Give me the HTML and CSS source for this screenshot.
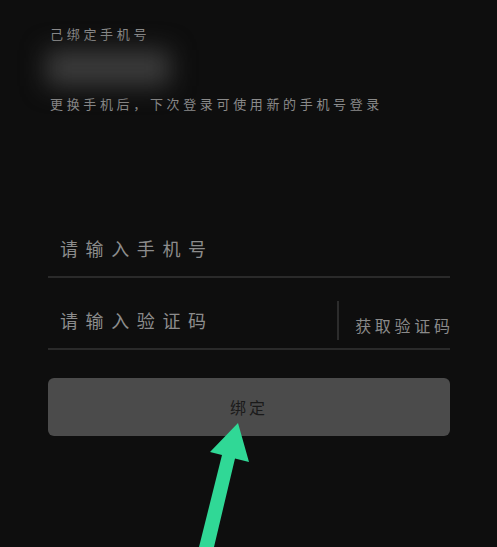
FILE: index.html
```html
<!DOCTYPE html>
<html lang="zh-CN">
<head>
<meta charset="utf-8">
<link rel="stylesheet" href="styles.css">
</head>
<body>
<div class="page">
  <div class="label">己绑定手机号</div>
  <div class="phone"><div class="phone-blur"></div></div>
  <div class="hint">更换手机后，下次登录可使用新的手机号登录</div>
  <div class="form">
    <div class="row">
      <span class="placeholder">请输入手机号</span>
    </div>
    <div class="row">
      <span class="placeholder grow">请输入验证码</span>
      <span class="divider"></span>
      <span class="getcode">获取验证码</span>
    </div>
    <div class="button">绑定</div>
  </div>
  <svg class="arrow" width="497" height="547" viewBox="0 0 497 547">
    <polygon points="238,423 249,462 235,458.5 214,547 199,547 222,455 210,452" fill="#30d896"/>
  </svg>
</div>
</body>
</html>
```
FILE: styles.css
```css
html, body {
  margin: 0;
  padding: 0;
  background: #0e0e0e;
}
body {
  width: 497px;
  height: 547px;
  overflow: hidden;
  font-family: "Noto Sans CJK SC", "Noto Sans", sans-serif;
}
.page {
  position: relative;
  height: 547px;
  padding: 0 47px 0 48px;
}
.label {
  padding-top: 25px;
  padding-left: 2px;
  font-size: 13px;
  line-height: 17px;
  letter-spacing: 3.7px;
  color: #8c8c8c;
}
.phone {
  height: 52px;
  display: flex;
  align-items: center;
}
.phone-blur {
  width: 124px;
  height: 36px;
  margin-left: -2px;
  background: #3c3c3c;
  filter: blur(12px);
}
.hint {
  padding-left: 2px;
  font-size: 13px;
  line-height: 20px;
  letter-spacing: 3.65px;
  color: #8a8a8a;
}
.form {
  margin-top: 92px;
}
.row {
  height: 56px;
  padding-top: 14px;
  border-bottom: 2px solid #2a2a2a;
  display: flex;
  align-items: center;
}
.placeholder {
  padding-left: 12px;
  font-size: 18px;
  letter-spacing: 7.6px;
  color: #8c8c8c;
}
.grow {
  flex: 1;
}
.divider {
  width: 2px;
  height: 39px;
  background: #2c2c2c;
  margin-right: 16px;
}
.getcode {
  font-size: 16px;
  letter-spacing: 3.7px;
  margin-right: -3.7px;
  margin-top: 10px;
  color: #8a8a8a;
}
.button {
  margin-top: 28px;
  height: 58px;
  border-radius: 6px;
  background: #4b4b4b;
  display: flex;
  align-items: center;
  justify-content: center;
  font-size: 16px;
  letter-spacing: 3px;
  color: #1a1a1a;
}
.arrow {
  position: absolute;
  left: 0;
  top: 0;
}
```
